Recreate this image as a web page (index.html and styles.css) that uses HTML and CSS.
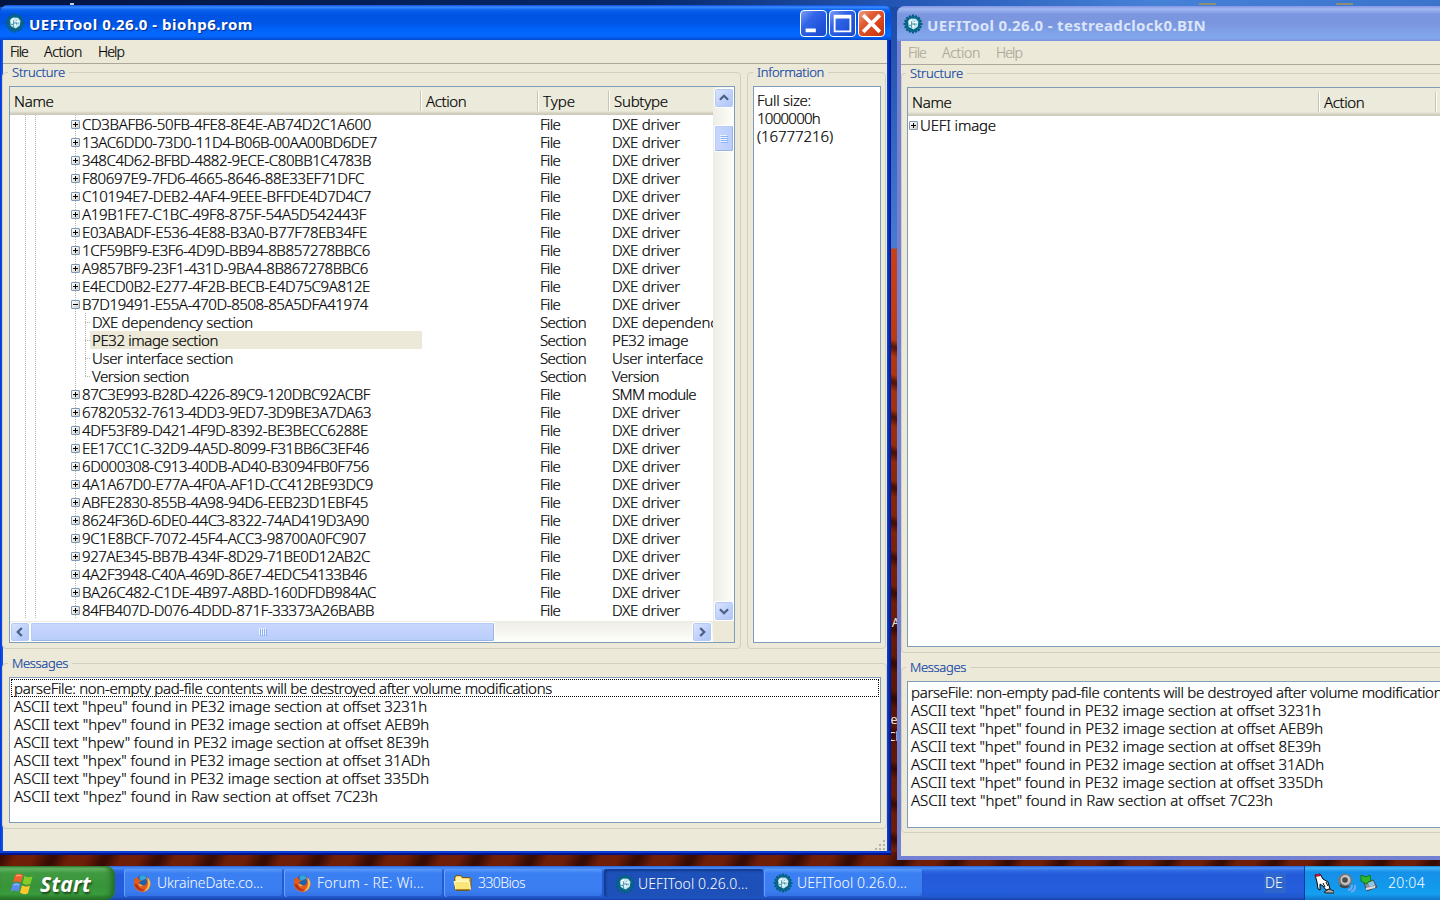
FILE: index.html
```html
<!DOCTYPE html>
<html lang="en">
<head>
<meta charset="utf-8">
<title>UEFITool 0.26.0</title>
<link rel="stylesheet" href="styles.css">
</head>
<body>
<svg class="defs" width="0" height="0">
  <symbol id="gear" viewBox="0 0 20 20">
    <path d="M10 .5v19M.5 10h19M3.400 3.400l13.200 13.200M16.600 3.400L3.400 16.600M6.500 1.500l7 17M13.500 1.500l-7 17M1.500 6.500l17 7M1.500 13.500l17-7" stroke="#075d80" stroke-width="2.2"/>
    <circle cx="10" cy="10" r="8" fill="#076589"/>
    <path d="M5 7l3-2.500 5 .3 2.500 3-.8 5-4 2.600-5-2.400z" fill="#c5e8ee"/>
    <path d="M8.500 6v8.500M8.500 10h5.500M11.500 7v5M6 11.500h2" stroke="#3d8ca8" stroke-width=".8" fill="none"/>
    <path d="M6 6.500h3M11 8.500h3M9.500 12h2M6 9h2" stroke="#fff" stroke-width="1.400"/>
  </symbol>
  <symbol id="firefox" viewBox="0 0 18 18">
    <circle cx="9.500" cy="8.500" r="7.500" fill="#1d62a9"/>
    <path d="M6 3Q9 0 13 2.500L15 6l-3-1-4 2z" fill="#37a5dc"/>
    <path d="M1 4l1.500 1L4 2.500 5.500 5l3 1.500-2.500 2q1 3.500 4.500 3 3.500-.5 3.500-4.500l-1-4Q18 6 17.500 11 16 17.500 9.500 18 2 17.500.8 10.500z" fill="#df5a20"/>
    <path d="M14.500 3Q18 7 17.300 11 15.500 17 10 17.500q5-3 5-8z" fill="#f6bd4c"/>
    <path d="M1.500 10q1 5 6 6.500 3 .5 5-1-6 .5-8-5z" fill="#b5321b"/>
    <path d="M5 10l3 .3 2 1.700-3 .5z" fill="#fba63a"/>
  </symbol>
  <symbol id="folder" viewBox="0 0 20 18">
    <path d="M1.500 4L3 1.500h5l1.500 2H17l1 1v10l-2 2H3l-1.500-2z" fill="#d8ab35" stroke="#6e5b1d"/>
    <path d="M2.500 4l1-1.500h4l1.500 2h7v3H3z" fill="#fff3a8"/>
    <path d="M1 7.500h15l1.500 8H3z" fill="#fbe577" stroke="#fffbd0"/>
    <path d="M3 15.500h14.500" stroke="#b48425"/>
  </symbol>
  <symbol id="flag" viewBox="0 0 24 24">
    <path d="M5 3q4-3 8 0l-2 7.500q-4-2-8 0z" fill="#f0622c"/>
    <path d="M14.500 4q4 2.500 8 .3l-2 7.500q-4 2.200-8-.6z" fill="#86cc29"/>
    <path d="M2.600 12q4-2.500 8 0l-2 7.700q-4-2.500-8 0z" fill="#5a8cf0"/>
    <path d="M12 13.200q4 2.600 8 .4l-2 7.600q-4 2.200-8-.6z" fill="#fbc929"/>
    <path d="M6 4q3-1.500 5.500 0" stroke="#ffb095" fill="none"/>
    <path d="M3.500 13q3-1.500 5.500 0" stroke="#a9c9ff" fill="none"/>
  </symbol>
</svg>

<main class="desktop">
  <i class="plate plate-a"></i><i class="plate plate-b"></i><i class="plate plate-c"></i>
  <span class="label label-a">A</span>
  <span class="label label-b">'e</span>
  <span class="label label-c">Ch</span>

  <section class="window active">
    <header class="titlebar">
      <svg class="app-icon"><use href="#gear"/></svg>
      <h1 data-w="224">UEFITool 0.26.0 - biohp6.rom</h1>
      <div class="caption">
        <svg class="cap" viewBox="0 0 27 27"><path d="M5 19h11v4H5z" fill="#fff"/></svg>
        <svg class="cap" viewBox="0 0 27 27"><path d="M4 4h19v19H4zM6 8v13h15V8z" fill="#fff" fill-rule="evenodd"/></svg>
        <svg class="cap close" viewBox="0 0 27 27"><path d="M4.500 4.500l18 18M22.500 4.500l-18 18" stroke="#fff" stroke-width="4"/></svg>
      </div>
    </header>
    <div class="client">
      <nav class="menu"><span data-w="18">File</span><span data-w="38">Action</span><span data-w="26">Help</span></nav>
      <div class="upper">
        <fieldset class="group structure">
          <legend data-w="53">Structure</legend>
          <div class="box tree">
            <div class="pane">
              <div class="head"><b class="c-name">Name</b><b class="c-action">Action</b><b class="c-type">Type</b><b class="c-sub">Subtype</b></div>
              <div class="rows" id="rows"></div>
              <div class="hscroll">
                <svg class="sb" viewBox="0 0 20 20"><path d="M12 5.500L7.500 10l4.500 4.500"/></svg>
                <i class="thumb"><svg width="8" height="8"><path d="M.5 0v7M2.500 0v7M4.500 0v7M6.500 0v7" stroke="#eef4fe"/><path d="M1.500 1v7M3.500 1v7M5.500 1v7M7.500 1v7" stroke="#8cb0f8"/></svg></i>
                <svg class="sb end" viewBox="0 0 20 20"><path d="M8 5.500l4.500 4.500L8 14.500"/></svg>
              </div>
            </div>
            <div class="vscroll">
              <svg class="sb" viewBox="0 0 20 20"><path d="M5.500 12L10 7.500l4.500 4.500"/></svg>
              <i class="thumb"><svg width="8" height="8"><path d="M0 .5h7M0 2.500h7M0 4.500h7M0 6.500h7" stroke="#eef4fe"/><path d="M1 1.500h7M1 3.500h7M1 5.500h7M1 7.500h7" stroke="#8cb0f8"/></svg></i>
              <svg class="sb end" viewBox="0 0 20 20"><path d="M5.500 8l4.500 4.500L14.500 8"/></svg>
              <i class="corner"></i>
            </div>
          </div>
        </fieldset>
        <fieldset class="group info">
          <legend data-w="67">Information</legend>
          <div class="box info-text"><p data-w="54">Full size:</p><p data-w="63">1000000h</p><p data-w="76">(16777216)</p></div>
        </fieldset>
      </div>
      <fieldset class="group messages">
        <legend data-w="56">Messages</legend>
        <div class="box log">
          <p class="focus"><span data-w="538">parseFile: non-empty pad-file contents will be destroyed after volume modifications</span></p>
          <p><span data-w="413">ASCII text "hpeu" found in PE32 image section at offset 3231h</span></p>
          <p><span data-w="415">ASCII text "hpev" found in PE32 image section at offset AEB9h</span></p>
          <p><span data-w="415">ASCII text "hpew" found in PE32 image section at offset 8E39h</span></p>
          <p><span data-w="416">ASCII text "hpex" found in PE32 image section at offset 31ADh</span></p>
          <p><span data-w="415">ASCII text "hpey" found in PE32 image section at offset 335Dh</span></p>
          <p><span data-w="364">ASCII text "hpez" found in Raw section at offset 7C23h</span></p>
        </div>
      </fieldset>
      <footer class="status">
        <svg width="12" height="12"><path d="M9 1h2v2H9zM9 5h2v2H9zM5 5h2v2H5zM9 9h2v2H9zM5 9h2v2H5zM1 9h2v2H1z" fill="#b8b4a3"/></svg>
      </footer>
    </div>
  </section>

  <section class="window inactive">
    <header class="titlebar">
      <svg class="app-icon"><use href="#gear"/></svg>
      <h1 data-w="279">UEFITool 0.26.0 - testreadclock0.BIN</h1>
    </header>
    <div class="client">
      <nav class="menu"><span data-w="18">File</span><span data-w="38">Action</span><span data-w="26">Help</span></nav>
      <fieldset class="group structure">
        <legend data-w="53">Structure</legend>
        <div class="box">
          <div class="head"><b class="c-name">Name</b><b class="c-action">Action</b><b class="c-type"></b></div>
          <div class="root"><i class="pm plus"></i><span data-w="76">UEFI image</span></div>
        </div>
      </fieldset>
      <fieldset class="group messages">
        <legend data-w="56">Messages</legend>
        <div class="box log">
          <p><span data-w="538">parseFile: non-empty pad-file contents will be destroyed after volume modifications</span></p>
          <p><span data-w="410">ASCII text "hpet" found in PE32 image section at offset 3231h</span></p>
          <p><span data-w="412">ASCII text "hpet" found in PE32 image section at offset AEB9h</span></p>
          <p><span data-w="410">ASCII text "hpet" found in PE32 image section at offset 8E39h</span></p>
          <p><span data-w="413">ASCII text "hpet" found in PE32 image section at offset 31ADh</span></p>
          <p><span data-w="412">ASCII text "hpet" found in PE32 image section at offset 335Dh</span></p>
          <p><span data-w="362">ASCII text "hpet" found in Raw section at offset 7C23h</span></p>
        </div>
      </fieldset>
    </div>
  </section>
</main>

<footer class="taskbar">
  <div class="start"><svg width="24" height="24"><use href="#flag"/></svg><strong data-w="51">Start</strong></div>
  <div class="tasks">
    <div class="task"><svg><use href="#firefox"/></svg><span data-w="106">UkraineDate.co...</span></div>
    <div class="task"><svg><use href="#firefox"/></svg><span data-w="107">Forum - RE: Wi...</span></div>
    <div class="task"><svg class="wide"><use href="#folder"/></svg><span data-w="47">330Bios</span></div>
    <div class="task pressed"><svg><use href="#gear"/></svg><span data-w="110">UEFITool 0.26.0...</span></div>
    <div class="task"><svg><use href="#gear"/></svg><span data-w="110">UEFITool 0.26.0...</span></div>
  </div>
  <span class="lang" data-w="18">DE</span>
  <div class="tray">
    <svg width="20" height="21" viewBox="0 0 20 21"><path d="M1 2l5-1 3 5 5 3 2 7-4 1-3-4-3-2v6l-2-1L3 9z" fill="#fff" stroke="#000"/><path d="M1 4l1-3h4l1 2z" fill="#b5122c"/><path d="M9 10l2 4M12 9l2 4" stroke="#000"/><path d="M10 19l5-3 5 2v2h-8z" fill="#aaa" stroke="#222"/></svg>
    <svg width="20" height="20" viewBox="0 0 20 20"><circle cx="8" cy="7.500" r="7" fill="#777"/><circle cx="8.500" cy="7" r="5" fill="#c5c5c5"/><circle cx="8" cy="7" r="2.800" fill="#494949"/><path d="M3 12q4 4 9 1" stroke="#444" fill="none" stroke-width="2"/><path d="M11 17q4 0 4-5M14 19q5-2 4-7" stroke="#78a9f4" stroke-width="1.800" fill="none"/></svg>
    <svg width="18" height="19" viewBox="0 0 18 19"><path d="M4 9l9-3 4 7-10 4z" fill="#86919c" stroke="#414a50"/><path d="M8 9l5-2 2 4-5 2z" fill="#8dc7ee"/><path d="M6 15l9-2" stroke="#ddd" stroke-width="2"/><path d="M1 1l5 2 4-2 1 6-3 1-1 2-6-3z" fill="#2cb92c" stroke="#117a16"/></svg>
    <time data-w="37">20:04</time>
  </div>
</footer>
<script src="app.js"></script>
</body>
</html>
```
FILE: app.js
```javascript
// label, label width, row kind, subtype, subtype width
const rows = [
  ["CD3BAFB6-50FB-4FE8-8E4E-AB74D2C1A600", 289],
  ["13AC6DD0-73D0-11D4-B06B-00AA00BD6DE7", 295],
  ["348C4D62-BFBD-4882-9ECE-C80BB1C4783B", 289],
  ["F80697E9-7FD6-4665-8646-88E33EF71DFC", 282],
  ["C10194E7-DEB2-4AF4-9EEE-BFFDE4D7D4C7", 289],
  ["A19B1FE7-C1BC-49F8-875F-54A5D542443F", 284],
  ["E03ABADF-E536-4E88-B3A0-B77F78EB34FE", 285],
  ["1CF59BF9-E3F6-4D9D-BB94-8B857278BBC6", 288],
  ["A9857BF9-23F1-431D-9BA4-8B867278BBC6", 286],
  ["E4ECD0B2-E277-4F2B-BECB-E4D75C9A812E", 288],
  ["B7D19491-E55A-470D-8508-85A5DFA41974", 286, "open"],
  ["DXE dependency section", 161, "child", "DXE dependency", 112],
  ["PE32 image section", 126, "child selected", "PE32 image", 76],
  ["User interface section", 141, "child", "User interface", 91],
  ["Version section", 97, "child last", "Version", 47],
  ["87C3E993-B28D-4226-89C9-120DBC92ACBF", 288, "", "SMM module", 84],
  ["67820532-7613-4DD3-9ED7-3D9BE3A7DA63", 289],
  ["4DF53F89-D421-4F9D-8392-BE3BECC6288E", 286],
  ["EE17CC1C-32D9-4A5D-8099-F31BB6C3EF46", 287],
  ["6D000308-C913-40DB-AD40-B3094FB0F756", 287],
  ["4A1A67D0-E77A-4F0A-AF1D-CC412BE93DC9", 291],
  ["ABFE2830-855B-4A98-94D6-EEB23D1EBF45", 286],
  ["8624F36D-6DE0-44C3-8322-74AD419D3A90", 287],
  ["9C1E8BCF-7072-45F4-ACC3-98700A0FC907", 284],
  ["927AE345-BB7B-434F-8D29-71BE0D12AB2C", 288],
  ["4A2F3948-C40A-469D-86E7-4EDC54133B46", 285],
  ["BA26C482-C1DE-4B97-A8BD-160DFDB984AC", 294],
  ["84FB407D-D076-4DDD-871F-33373A26BABB", 292],
];

document.getElementById("rows").innerHTML = rows.map(([label, w, kind = "", sub = "DXE driver", sw = 68]) => {
  const child = kind.includes("child");
  const marker = child ? '<i class="stub"></i>' : `<i class="pm ${kind === "open" ? "" : "plus"}"></i>`;
  return `<div class="row ${kind}"><i class="guides"></i>${marker}<div class="name"><span data-w="${w}">${label}</span></div>` +
    `<div class="type"><span data-w="${child ? 46 : 20}">${child ? "Section" : "File"}</span></div>` +
    `<div class="sub"><span data-w="${sw}">${sub}</span></div></div>`;
}).join("");

// Tracks each label to its nominal width.
document.querySelectorAll("[data-w]").forEach((el) => {
  const range = document.createRange();
  range.selectNodeContents(el);
  const natural = range.getBoundingClientRect().width;
  el.style.letterSpacing = (el.dataset.w - natural) / el.textContent.length + "px";
});
```
FILE: styles.css
```css
* { box-sizing: border-box; }
body {
  margin: 0; width: 1440px; height: 900px; overflow: hidden;
  display: flex; flex-direction: column;
  font: 300 15px/18px "Noto Sans", "Open Sans", sans-serif;
  font-variant-ligatures: none;
  color: #000; white-space: nowrap;
  -webkit-text-stroke: 0.2px currentColor;
}
p, h1, fieldset, legend { margin: 0; padding: 0; border: 0; }
b { font-weight: 300; }
i { display: block; }
.defs { position: absolute; }

/* desktop */
.desktop {
  position: relative; flex: none; height: 866px; overflow: hidden;
  background:
    linear-gradient(90deg, #021440, #06286a 45%, #2356b4 62%, #4681d8 80%, #3b73cd) 0 0 / 100% 7px no-repeat,
    repeating-linear-gradient(118deg, rgba(20,0,0,.6) 0 4px, transparent 16px 32px, rgba(20,0,0,.6) 47px) 0 852px / 100% 14px no-repeat,
    repeating-linear-gradient(20deg, transparent 0 12px, rgba(25,0,0,.6) 20px 22px, transparent 28px 33px) 0 330px / 100% 522px no-repeat,
    linear-gradient(#1b4aa6 0, #4a7bd3 248px, #c84015 249px, #c03c10 320px, #8a2808 480px, #571604 700px, #701e08 866px);
}
.plate { position: absolute; top: 3px; height: 2px; width: 17px; background: #8d9076; }
.plate-a { left: 70px; width: 4px; background: #c3cbd8; }
.plate-b { left: 1199px; }
.plate-c { left: 1336px; }
.label { position: absolute; color: #fff; font-size: 12px; }
.label-a { left: 892px; top: 614px; }
.label-b { left: 889px; top: 711px; }
.label-c { left: 888px; top: 728px; }
.plate-b, .plate-c { margin-left: 0; }

/* windows */
.window { position: absolute; display: flex; flex-direction: column; }
.active {
  left: 0; top: 5px; width: 891px; height: 850px; padding: 0 4px 4px 3px;
  border-radius: 8px 8px 0 0;
  background: linear-gradient(90deg, #0831d9, #0a55ea 2px, #0a55ea 886px, #0638d0 888px, #00138c 891px);
  box-shadow: inset 0 -2px #00138c, inset 0 -4px #0a3ed4;
}
.inactive {
  left: 897px; top: 6px; width: 560px; height: 854px; padding: 0 0 4px 4px;
  border-radius: 8px 0 0 0; background: #7480d2;
}
.titlebar { flex: none; height: 35px; display: flex; align-items: center; padding: 2px 6px 0 3px; }
.active .titlebar {
  margin: 0 -4px 0 -3px; padding-left: 5px; border-radius: 8px 8px 0 0;
  background: linear-gradient(#0a4ad8, #3c8bfc 2px, #0a62ee 5px, #0054e2 9px, #0055e5 18px, #0064fb 24px, #0468ff 31px, #0149cf 35px);
}
.inactive .titlebar {
  margin-left: -4px; padding-left: 6px; border-radius: 8px 0 0 0;
  background: linear-gradient(#8494e2, #9fb9f2 3px, #7c97e0 8px, #7a96df 18px, #80a4e9 28px, #82a7ec 32px, #7a92dc 35px);
}
.app-icon { width: 20px; height: 20px; flex: none; margin-top: -2px; }
h1 { margin-left: 4px; padding-top: 1px; font-weight: 700; font-size: 15px; color: #fff; text-shadow: 1px 1px 1px #0a2a8c; -webkit-text-stroke: 0; }
.inactive h1 { color: #dbe5fa; text-shadow: none; }
.caption { margin-left: auto; display: flex; gap: 2px; }
.cap {
  width: 27px; height: 27px; border: 1px solid #fff; border-radius: 4px;
  background: linear-gradient(135deg, #7d9df5, #3265e6 35%, #2256dd 65%, #1a49c9);
}
.close { background: linear-gradient(135deg, #efa088, #e05a33 35%, #d9441b 65%, #bb3210); }
.client { flex: 1; min-height: 0; background: #ece9d8; display: flex; flex-direction: column; }
.menu {
  flex: none; height: 24px; display: flex; padding: 3px 7px 0; border-bottom: 1px solid #aca899;
  font-size: 14px;
}
.menu span:nth-child(1) { width: 34px; }
.menu span:nth-child(2) { width: 54px; }
.inactive .menu { color: #aca899; }

/* group boxes */
.group { position: relative; border: 1px solid #d0d0bf; border-radius: 4px; min-width: 0; }
.group > legend {
  position: absolute; top: -8px; left: 5px; padding: 0 4px; background: #ece9d8;
  font-size: 13px; line-height: 14px; color: #1044a5;
}
.box { background: #fff; border: 1px solid #7f9db9; }
.upper { flex: none; display: flex; gap: 6px; margin-top: 8px; height: 577px; }
.active .structure { width: 739px; padding: 13px 5px 5px 6px; margin-left: -1px; }
.info { width: 139px; padding: 13px 4px 5px 5px; }
.active .box.tree { height: 557px; display: flex; overflow: hidden; }
.info-text { height: 557px; padding: 4px 3px; font-size: 15px; }
.active .messages { flex: none; margin: 14px 0 0 -1px; height: 166px; padding: 13px 5px 5px 6px; }
.inactive .group > legend { left: 4px; }
.log { padding: 1px 1px; overflow: hidden; }
.active .log { height: 146px; }
.log p { height: 18px; padding-left: 3px; }
.inactive .log p { padding-left: 2px; }
.log .focus { outline: 1px dotted #000; outline-offset: -1px; padding-left: 3px; margin: 0; }
.status { flex: 1; display: flex; justify-content: flex-end; align-items: flex-end; padding: 0 1px; }

/* tree */
.head {
  flex: none; display: flex; height: 28px; line-height: 29px; font-size: 15px;
  background: linear-gradient(#ebeadb 24px, #d6d2c2 26px, #cbc7b8 28px);
}
.head b { position: relative; flex: none; padding-left: 6px; overflow: hidden; }
.head b + b::before { content: ""; position: absolute; left: 0; top: 4px; height: 20px; border-left: 1px solid #c7c5b2; border-right: 1px solid #fff; }
.head .c-name { width: 410px; padding-left: 4px; letter-spacing: -.3px; }
.head .c-action { width: 117px; letter-spacing: -.4px; }
.c-type { width: 71px; }
.head .c-sub { flex: 1; letter-spacing: -.25px; }
.pane { flex: none; width: 703px; display: flex; flex-direction: column; }
.rows { flex: 1; overflow: hidden; }
.row {
  display: grid; grid-template-columns: 61px 9px 342px 190px 101px; height: 18px; align-items: center; overflow: hidden;
  background: repeating-linear-gradient(#b5b5aa 0 1px, transparent 1px 2px) 65px 0 / 1px 18px no-repeat;
}
.guides {
  height: 18px;
  background:
    repeating-linear-gradient(#b5b5aa 0 1px, transparent 1px 2px) 15px 0 / 1px 18px no-repeat,
    repeating-linear-gradient(#b5b5aa 0 1px, transparent 1px 2px) 25px 0 / 1px 18px no-repeat;
}
.pm {
  width: 9px; height: 9px; border: 1px solid #7c98b5; border-radius: 1px;
  background:
    linear-gradient(#000, #000) 1px 3px / 5px 1px no-repeat,
    linear-gradient(135deg, #fff, #d3cec2);
}
.pm.plus {
  background:
    linear-gradient(#000, #000) 1px 3px / 5px 1px no-repeat,
    linear-gradient(#000, #000) 3px 1px / 1px 5px no-repeat,
    linear-gradient(135deg, #fff, #d3cec2);
}
.name { padding-left: 2px; }
.type { padding-left: 118px; }
.child { grid-template-columns: 61px 19px 332px 190px 101px; }
.stub {
  height: 18px; margin-left: 14px; width: 5px;
  background:
    repeating-linear-gradient(#b5b5aa 0 1px, transparent 1px 2px) 0 0 / 1px 18px no-repeat,
    repeating-linear-gradient(90deg, #b5b5aa 0 1px, transparent 1px 2px) 0 9px / 5px 1px no-repeat;
}
.last .stub { background-size: 1px 10px, 5px 1px; }
.selected .name { background: #ece9d8; }

/* scroll bars */
.hscroll { flex: none; height: 21px; display: flex; padding: 1px 1px 0 0; background: linear-gradient(#eeede5, #fefefb); }
.vscroll { flex: 1; display: flex; flex-direction: column; padding: 1px 0 0 1px; background: linear-gradient(90deg, #eeede5, #fefefb); }
.sb {
  flex: none; width: 20px; height: 20px; border: 1px solid #fff; border-radius: 3px;
  background: linear-gradient(135deg, #dce6fe, #bccffb 60%, #b0c6f6); box-shadow: inset 0 0 0 1px #b5c9f5;
  fill: none; stroke: #4d6185; stroke-width: 2.5;
}
.end { margin-left: auto; }
.thumb {
  display: flex; align-items: center; justify-content: center;
  border: 1px solid #fff; border-radius: 2px; box-shadow: inset -1px -1px #9bb4e4, inset 1px 1px #b7cbf7;
}
.hscroll .thumb { width: 465px; background: linear-gradient(#c9d7fd, #b8cdfb); }
.vscroll .thumb { margin-top: 17px; height: 27px; width: 20px; background: linear-gradient(90deg, #c9d7fd, #b8cdfb); }
.vscroll .end { margin: auto 0 0; }
.corner { flex: none; height: 21px; margin-left: -1px; background: #ece9d8; }

/* second window */
.inactive .structure { margin: 8px 0 0 0; height: 580px; padding: 13px 0 5px 5px; flex: none; border-right: 0; }
.inactive .structure .box { height: 560px; overflow: hidden; }
.root { display: flex; align-items: center; height: 18px; padding-left: 1px; gap: 2px; }
.inactive .messages { flex: none; margin-top: 14px; height: 166px; padding: 13px 0 5px 5px; }
.inactive .messages .box { height: 147px; }

/* taskbar */
.taskbar {
  flex: none; height: 34px; display: flex; color: #fff; font-size: 14px; -webkit-text-stroke: 0;
  background: linear-gradient(#2560d8, #4a8cf4 2px, #2d68e2 5px, #245ad9 9px, #255edd 25px, #2158d0 31px, #1941a5);
}
.start {
  width: 115px; display: flex; align-items: center; gap: 6px; padding: 2px 0 0 10px; border-radius: 0 9px 9px 0;
  background: linear-gradient(#2f7a33, #6fbb6c 2px, #3f9a41 7px, #389339 20px, #3a9b3c 28px, #246f28);
  box-shadow: inset -4px 0 5px #246f28;
}
.start strong { font: italic 700 21px/24px "Open Sans", "Noto Sans", sans-serif; text-shadow: 1px 2px 2px #1c4a1c; }
.tasks { display: flex; gap: 1px; margin-left: 9px; padding: 3px 0; }
.task {
  width: 159px; height: 28px; display: flex; align-items: center; gap: 6px; padding: 0 0 0 9px; border-radius: 3px;
  background: linear-gradient(#5c9bfa, #3b80f3 4px, #3a7df1 22px, #3170e2);
  box-shadow: inset 1px 0 #6aa2fa, inset -1px -1px #2559c8;
}
.task svg { flex: none; width: 18px; height: 18px; }
.task .wide { width: 20px; margin-right: -1px; }
.pressed { background: #1d50b8; box-shadow: inset 2px 2px 2px #123a8f; padding: 2px 0 0 11px; }
.task:nth-child(n+4) svg { width: 20px; height: 20px; }
.task:nth-child(n+4) { gap: 3px; }
.task:nth-child(5) { gap: 4px; }
.lang { margin: 7px 0 7px 341px; width: 22px; padding: 1px 0 0 1px; height: 20px; background: #2f66cc; }
.tray {
  margin-left: auto; width: 136px; display: flex; align-items: center; gap: 3px; padding: 0 0 0 9px;
  border-left: 1px solid #0c3c9c;
  background: linear-gradient(#1483dc, #45b8f8 2px, #1690e9 6px, #119aec 22px, #16a0f2 28px, #0f76c8);
}
.tray time { margin-left: 7px; }
```
